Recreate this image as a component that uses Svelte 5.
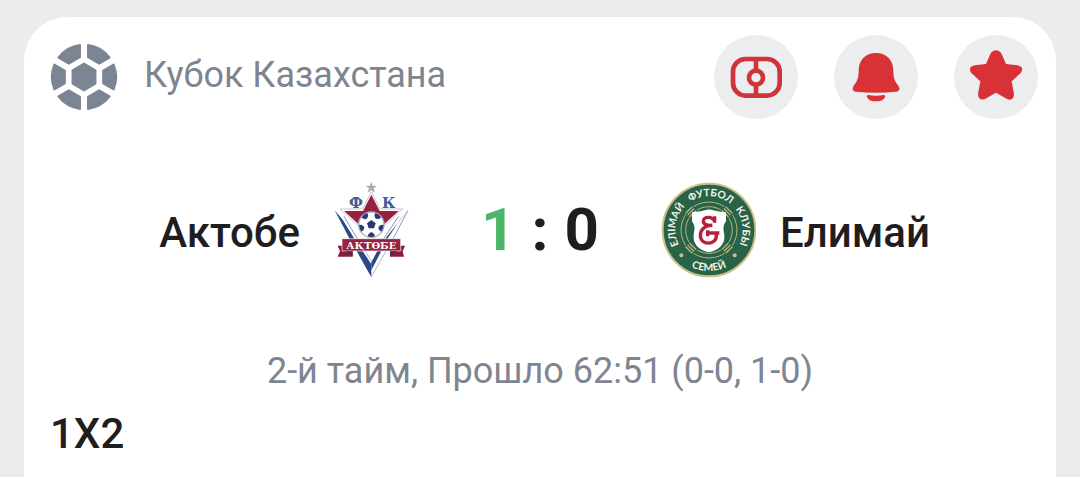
<script>
  export let tournament = 'Кубок Казахстана';
  export let home = { name: 'Актобе', score: 1 };
  export let away = { name: 'Елимай', score: 0 };
  export let status = '2-й тайм, Прошло 62:51 (0-0, 1-0)';
  export let market = '1X2';

  const plates = [0, 60, 120, 180, 240, 300];
  const patches = [0, 72, 144, 216, 288];
  const knots = [45, 135, 225, 315];
</script>

<main class="card">
  <header class="header">
    <svg class="sport" viewBox="-101 -101 202 202" aria-hidden="true">
      <path d="M0 -40 L34 -20 V20 L0 40 L-34 20 V-20 Z" />
      {#each plates as angle}
        <path d="M57 -19 L88 -37 A96 96 0 0 1 88 37 L57 19 Z" transform="rotate({angle})" />
      {/each}
    </svg>
    <h1 class="tournament">{tournament}</h1>
    <div class="actions">
      <button type="button" aria-label="Поле">
        <svg viewBox="27 21 252 252" aria-hidden="true">
          <g class="line">
            <rect x="84" y="93" width="140" height="110" rx="38" />
            <circle cx="153" cy="149" r="21" />
            <path d="M153 93 V126 M153 172 V203" />
          </g>
        </svg>
      </button>
      <button type="button" aria-label="Уведомления">
        <svg viewBox="27 21 252 252" aria-hidden="true">
          <path d="M153 75 C120 75 101 98 101 128 C101 150 97 158 87 172 C79 184 84 190 92 191 Q153 197 214 191 C222 190 228 184 219 172 C209 158 205 150 205 128 C205 98 186 75 153 75 Z" />
          <path d="M130 201 Q153 205 176 201 C181 201 182 205 179 209 Q173 220 153 220 Q133 220 127 209 C124 205 125 201 130 201 Z" />
        </svg>
      </button>
      <button type="button" aria-label="Избранное">
        <svg viewBox="27 21 252 252" aria-hidden="true">
          <path d="M136 78 Q142 67 153 67 Q164 67 170 78 L183 108 L217 112 Q240 117 227 135 L200 160 L207 199 Q205 221 186 213 L153 194 L120 213 Q101 220 99 199 L106 160 L79 135 Q67 117 89 112 L123 108 Z" />
        </svg>
      </button>
    </div>
  </header>

  <section class="match">
    <div class="team home">
      <h2>{home.name}</h2>
      <svg class="logo" viewBox="12 21 288 288" role="img" aria-label={home.name}>
        <path fill="#a9abb3" d="M154 20 L158 32 L171 33 L161 40 L165 53 L154 46 L143 53 L147 40 L137 33 L150 32 Z" />
        <path fill="#2c4786" d="M44 106 L68 134 L126 228 H108 Z" />
        <path fill="#2c4786" d="M264 106 L240 134 L178 228 H166 Z" />
        <path fill="none" stroke="#8d97b5" stroke-width="3" d="M72 124 L134 228 M236 124 L178 210 M264 106 L200 228" />
        <path fill="#2c4786" d="M110 228 H128 L154 268 V307 Z" />
        <path fill="#2c4786" d="M154 262 L172 228 H184 L154 286 Z" />
        <path fill="none" stroke="#8d97b5" stroke-width="2" d="M154 306 L198 228 M136 228 L154 258" />
        <path fill="#fff" stroke="#b3a3b6" stroke-width="2" d="M154 50 L180 102 H248 L196 150 H112 L60 102 H128 Z" />
        <path fill="#96223f" d="M154 59 L179 108 H236 L194 146 L154 160 L114 146 L72 108 H129 Z" />
        <circle cx="154" cy="149" r="38" fill="#fff" stroke="#a7b0cb" stroke-width="4" />
        <g fill="#29386f">
          <path d="M154 135 L167 145 L162 160 H146 L141 145 Z" />
          {#each patches as angle}
            <path d="M143 114 Q154 110 165 114 L162 122 L154 127 L146 122 Z" transform="rotate({angle + 36} 154 149)" />
          {/each}
        </g>
        <path fill="#8a1c3a" d="M53 212 H98 V245 H53 L60 229 Z M210 212 H255 L248 229 L252 245 H210 Z" />
        <path fill="#96223f" stroke="#fff" stroke-width="2" d="M66 191 H242 V228 H66 Z" />
        <path fill="#5c2452" d="M76 229 H98 V244 Z M232 229 H210 V244 Z" />
        <text x="154" y="221" class="ribbon">АҚТӨБЕ</text>
        <text x="108" y="98" class="initial">Ф</text>
        <text x="206" y="98" class="initial">К</text>
      </svg>
    </div>

    <div class="score">
      <span class="leading">{home.score}</span>
      <span>:</span>
      <span>{away.score}</span>
    </div>

    <div class="team">
      <svg class="logo" viewBox="15 21 288 288" role="img" aria-label={away.name}>
        <defs>
          <path id="arc-top" d="M111 252 A101 101 0 1 1 213 252" />
          <path id="arc-bottom" d="M39 165 A123 123 0 0 0 285 165" />
        </defs>
        <circle cx="162" cy="165" r="139" fill="#286247" stroke="#c9bf87" stroke-width="6" />
        <circle cx="162" cy="165" r="84" fill="none" stroke="#b8b77f" stroke-width="3" />
        <circle cx="162" cy="165" r="70" fill="none" stroke="#b8b77f" stroke-width="3" />
        {#each knots as angle}
          <g transform="rotate({angle} 162 165)">
            <path fill="#286247" d="M146 78 H178 V108 H146 Z" />
            <path stroke="#b8b77f" stroke-width="4" d="M148 80 H176 M148 88 H176 M148 96 H176" />
          </g>
        {/each}
        <path fill="#fff" d="M111 112 Q137 110 162 103 Q187 110 213 112 V139 C204 151 204 160 208 179 C212 209 188 227 162 232 C136 227 112 209 116 179 C120 160 120 151 111 139 Z" />
        <g class="monogram">
          <path d="M178 138 C172 123 145 124 145 138 C145 148 155 152 172 151 C149 151 136 164 136 181 C136 212 184 212 184 182 V174" />
          <path d="M179 124 V143 M162 174 H193 M158 166 V184" />
        </g>
        <g class="ring">
          <text><textPath href="#arc-top" startOffset="23%">ЕЛІМАЙ</textPath></text>
          <text><textPath href="#arc-top" startOffset="51%">ФУТБОЛ</textPath></text>
          <text><textPath href="#arc-top" startOffset="78%">КЛУБЫ</textPath></text>
          <text><textPath href="#arc-bottom" startOffset="50%">СЕМЕЙ</textPath></text>
        </g>
        <circle cx="79" cy="241" r="6" fill="#c9bf87" />
        <circle cx="239" cy="241" r="6" fill="#c9bf87" />
      </svg>
      <h2>{away.name}</h2>
    </div>
  </section>

  <p class="status">{status}</p>
  <h3 class="market">{market}</h3>
</main>

<style>
  :global(body) {
    margin: 0;
    background: #ebecee;
    font-family: Roboto, 'Noto Sans', sans-serif;
    color: #211d1e;
  }

  h1,
  h2,
  h3,
  p {
    margin: 0;
  }

  .card {
    box-sizing: border-box;
    min-height: calc(100vh - 17px);
    margin: 17px 24px 0;
    padding: 18px 18px 0 26px;
    background: #fff;
    border-radius: 44px 44px 0 0;
  }

  /* Header */
  .header {
    display: flex;
    align-items: center;
  }

  .sport {
    width: 68px;
    height: 68px;
    fill: #7b8594;
    stroke: #7b8594;
    stroke-width: 6;
    stroke-linejoin: round;
  }

  .tournament {
    flex: 1;
    margin: 0 24px 4px 26px;
    font-size: 36px;
    line-height: 42px;
    font-weight: 400;
    color: #7e8590;
  }

  .actions {
    display: flex;
    gap: 36px;
  }

  .actions button {
    width: 84px;
    height: 84px;
    padding: 0;
    border: 0;
    border-radius: 50%;
    background: #ecedef;
    cursor: pointer;
  }

  .actions svg {
    display: block;
    width: 100%;
    height: 100%;
    fill: #d93236;
  }

  .actions .line {
    fill: none;
    stroke: #d0343a;
    stroke-width: 14;
  }

  /* Teams and score */
  .match {
    display: grid;
    grid-template-columns: 1fr 240px 1fr;
    align-items: center;
    margin: 63px 8px 0 0;
  }

  .team {
    display: flex;
    align-items: center;
    gap: 24px;
  }

  .home {
    justify-content: flex-end;
  }

  .team h2 {
    padding-top: 6px;
    font-size: 42px;
    line-height: 48px;
    font-weight: 500;
  }

  .logo {
    flex: none;
    width: 96px;
    height: 96px;
  }

  .score {
    display: flex;
    justify-content: center;
    gap: 16px;
    font-size: 60px;
    line-height: 72px;
    font-weight: 700;
  }

  .leading {
    color: #4db568;
  }

  .ribbon,
  .initial {
    font-family: 'DejaVu Serif', serif;
    font-weight: 700;
    text-anchor: middle;
  }

  .ribbon {
    font-size: 30px;
    fill: #fff;
  }

  .initial {
    font-size: 44px;
    fill: #3f5c97;
  }

  .ring {
    font-family: Lato, sans-serif;
    font-size: 31px;
    font-weight: 700;
    text-anchor: middle;
    fill: #f1f4e6;
  }

  .monogram {
    fill: none;
    stroke: #b91f38;
    stroke-width: 10;
  }

  /* Match time and market */
  .status {
    margin: 72px 8px 0 0;
    text-align: center;
    font-size: 36px;
    line-height: 42px;
    color: #7e8590;
  }

  .market {
    margin-top: 16px;
    font-size: 42px;
    line-height: 52px;
    font-weight: 500;
  }
</style>
